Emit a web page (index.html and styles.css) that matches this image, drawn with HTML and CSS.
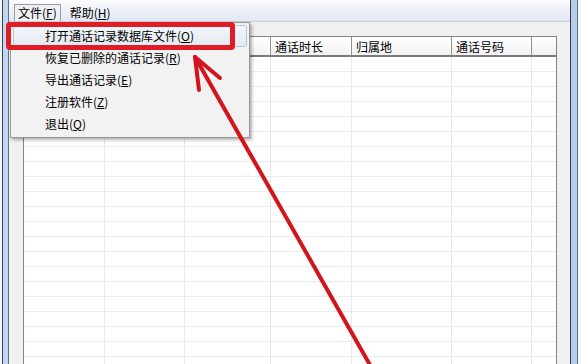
FILE: index.html
```html
<!DOCTYPE html>
<html lang="zh-CN">
<head>
    <meta charset="UTF-8">
    <title>通话记录恢复</title>
    <link rel="stylesheet" href="styles.css">
</head>
<body>
    <div class="win">
        <div class="edge-left"></div>
        <div class="client">
            <div class="menubar">
                <span class="menu-item open">文件(<u>F</u>)</span>
                <span class="menu-item">帮助(<u>H</u>)</span>
            </div>
            <div class="area">
                <div class="list">
                    <table>
                        <thead>
                            <tr>
                                <th class="c1"></th>
                                <th class="c2"></th>
                                <th class="c3"></th>
                                <th class="c4">通话时长</th>
                                <th class="c5">归属地</th>
                                <th class="c6">通话号码</th>
                                <th class="c7"></th>
                            </tr>
                        </thead>
                        <tbody id="rows"></tbody>
                    </table>
                </div>
            </div>
        </div>
        <div class="edge-right"></div>
    </div>

    <!-- File menu dropdown -->
    <div class="dropdown">
        <div class="drop-item hover">打开通话记录数据库文件(<u>O</u>)</div>
        <div class="drop-item">恢复已删除的通话记录(<u>R</u>)</div>
        <div class="drop-item">导出通话记录(<u>E</u>)</div>
        <div class="drop-item">注册软件(<u>Z</u>)</div>
        <div class="drop-item">退出(<u>Q</u>)</div>
    </div>

    <!-- annotation -->
    <div class="mark"></div>
    <svg class="arrow" width="581" height="364" viewBox="0 0 581 364">
        <g stroke="#d3141b" stroke-width="4" stroke-linecap="round" fill="none">
            <line x1="195" y1="57" x2="374" y2="372"/>
            <line x1="195" y1="57" x2="220" y2="78"/>
            <line x1="195" y1="57" x2="199" y2="90"/>
        </g>
    </svg>

    <script>
        const rows = document.getElementById('rows');
        for (let i = 0; i < 22; i++) {
            const row = rows.insertRow();
            for (let j = 0; j < 7; j++) {
                row.insertCell();
            }
        }
    </script>
</body>
</html>
```

FILE: styles.css
```css
html, body { margin: 0; padding: 0; width: 581px; height: 364px; overflow: hidden; }
body { font-family: "Noto Sans CJK SC", "Microsoft YaHei", sans-serif; font-size: 12px; color: #000; background: #f0f0f0; position: relative; }
u { text-decoration: underline; text-underline-offset: 1px; }

.win { display: flex; height: 364px; }
.edge-left { width: 9px; box-sizing: border-box; background: #c2d6ec; border-left: 2px solid #f2f4f7; box-shadow: inset 1px 0 0 #34455c, inset -1px 0 0 #5d708a; }
.edge-right { width: 11px; box-sizing: border-box; background: #b7cde6; border-right: 3px solid #f4f6f9; box-shadow: inset 1px 0 0 #2e3d52, inset -1px 0 0 #5b6f88; }
.client { flex: 1; display: flex; flex-direction: column; background: #f0f0f0; }

.menubar { height: 22px; box-sizing: border-box; padding: 4px 0 0 5px; display: flex; gap: 5px; background: linear-gradient(#fdfdfe, #f1f3f9 35%, #e2e7f2); border-bottom: 1px solid #c9d0dc; }
.menu-item { height: 17px; line-height: 15px; padding: 0 3px; border: 1px solid transparent; box-sizing: border-box; }
.menu-item.open { border-color: #9c9c9c; background: #eef0f4; border-bottom: none; }

.area { flex: 1; padding: 14px 0 0 14px; overflow: hidden; }
.list { width: 534px; height: 400px; box-sizing: border-box; background: #fff; border: 1px solid #7f858e; border-bottom: none; overflow: hidden; }

table { border-collapse: separate; border-spacing: 0; table-layout: fixed; width: 532px; }
th { height: 20px; box-sizing: border-box; padding: 0 0 0 4px; text-align: left; font-weight: normal; background: linear-gradient(#ffffff, #f2f2f2); border-bottom: 2px solid #7b7b7b; border-right: 1px solid #8e8e8e; box-shadow: inset -1px 0 0 #ffffff; }
th.c7 { border-right: none; box-shadow: none; }
td { height: 15px; box-sizing: border-box; padding: 0; border-bottom: 1px solid #ececec; border-right: 1px solid #e8e8e8; }
td:last-child { border-right: none; }
.c1 { width: 81px; }
.c2 { width: 80px; }
.c3 { width: 86px; }
.c4 { width: 81px; }
.c5 { width: 100px; }
.c6 { width: 80px; }

.dropdown { position: absolute; left: 10px; top: 22px; width: 240px; box-sizing: border-box; padding: 2px; background: #f2f2f2; border: 1px solid #979797; box-shadow: 2px 2px 3px rgba(0, 0, 0, 0.3); }
.drop-item { height: 22px; box-sizing: border-box; padding-left: 31px; white-space: nowrap; border: 1px solid transparent; border-radius: 3px; line-height: 20px; }
.drop-item.hover { background: linear-gradient(#f3f6fa, #e4eaf2); border-color: #b8c6d8; }

.mark { position: absolute; left: 6px; top: 22px; width: 229px; height: 28px; box-sizing: border-box; border: 5px solid #df1d25; border-radius: 4px; }
.arrow { position: absolute; left: 0; top: 0; }
```
